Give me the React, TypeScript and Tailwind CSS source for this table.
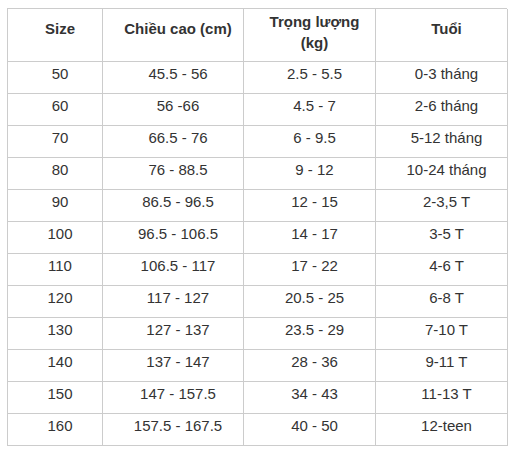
import React from "react";

const rows: [string, string, string, string][] = [
  ["50", "45.5 - 56", "2.5 - 5.5", "0-3 tháng"],
  ["60", "56 -66", "4.5 - 7", "2-6 tháng"],
  ["70", "66.5 - 76", "6 - 9.5", "5-12 tháng"],
  ["80", "76 - 88.5", "9 - 12", "10-24 tháng"],
  ["90", "86.5 - 96.5", "12 - 15", "2-3,5 T"],
  ["100", "96.5 - 106.5", "14 - 17", "3-5 T"],
  ["110", "106.5 - 117", "17 - 22", "4-6 T"],
  ["120", "117 - 127", "20.5 - 25", "6-8 T"],
  ["130", "127 - 137", "23.5 - 29", "7-10 T"],
  ["140", "137 - 147", "28 - 36", "9-11 T"],
  ["150", "147 - 157.5", "34 - 43", "11-13 T"],
  ["160", "157.5 - 167.5", "40 - 50", "12-teen"],
];

export default function App() {
  return (
    <div
      className="w-[515px] h-[456px] bg-white pl-[7px] pt-[8px] text-[#333]"
      style={{ fontFamily: '"Liberation Sans", Arial, sans-serif' }}
    >
      <div className="grid grid-cols-[95px_141px_132px_132px] w-[500px] border-l border-t border-[#cccccc] text-[15px] leading-[21px]">
        <div className="h-[53px] border-r border-b border-[#cccccc] flex justify-center pl-[10px] pt-[9px] font-bold">Size</div>
        <div className="h-[53px] border-r border-b border-[#cccccc] flex justify-center pl-[10px] pt-[9px] font-bold">Chiều cao (cm)</div>
        <div className="h-[53px] border-r border-b border-[#cccccc] flex flex-col items-center pl-[10px] pt-[2px] font-bold">
          <span>Trọng lượng</span>
          <span>(kg)</span>
        </div>
        <div className="h-[53px] border-r border-b border-[#cccccc] flex justify-center pl-[10px] pt-[9px] font-bold">Tuổi</div>
        {rows.map((r) =>
          r.map((c, i) => (
            <div
              key={r[0] + "-" + i}
              className="h-[32px] border-r border-b border-[#cccccc] flex justify-center pl-[10px] pt-[1px]"
            >
              {c}
            </div>
          ))
        )}
      </div>
    </div>
  );
}
